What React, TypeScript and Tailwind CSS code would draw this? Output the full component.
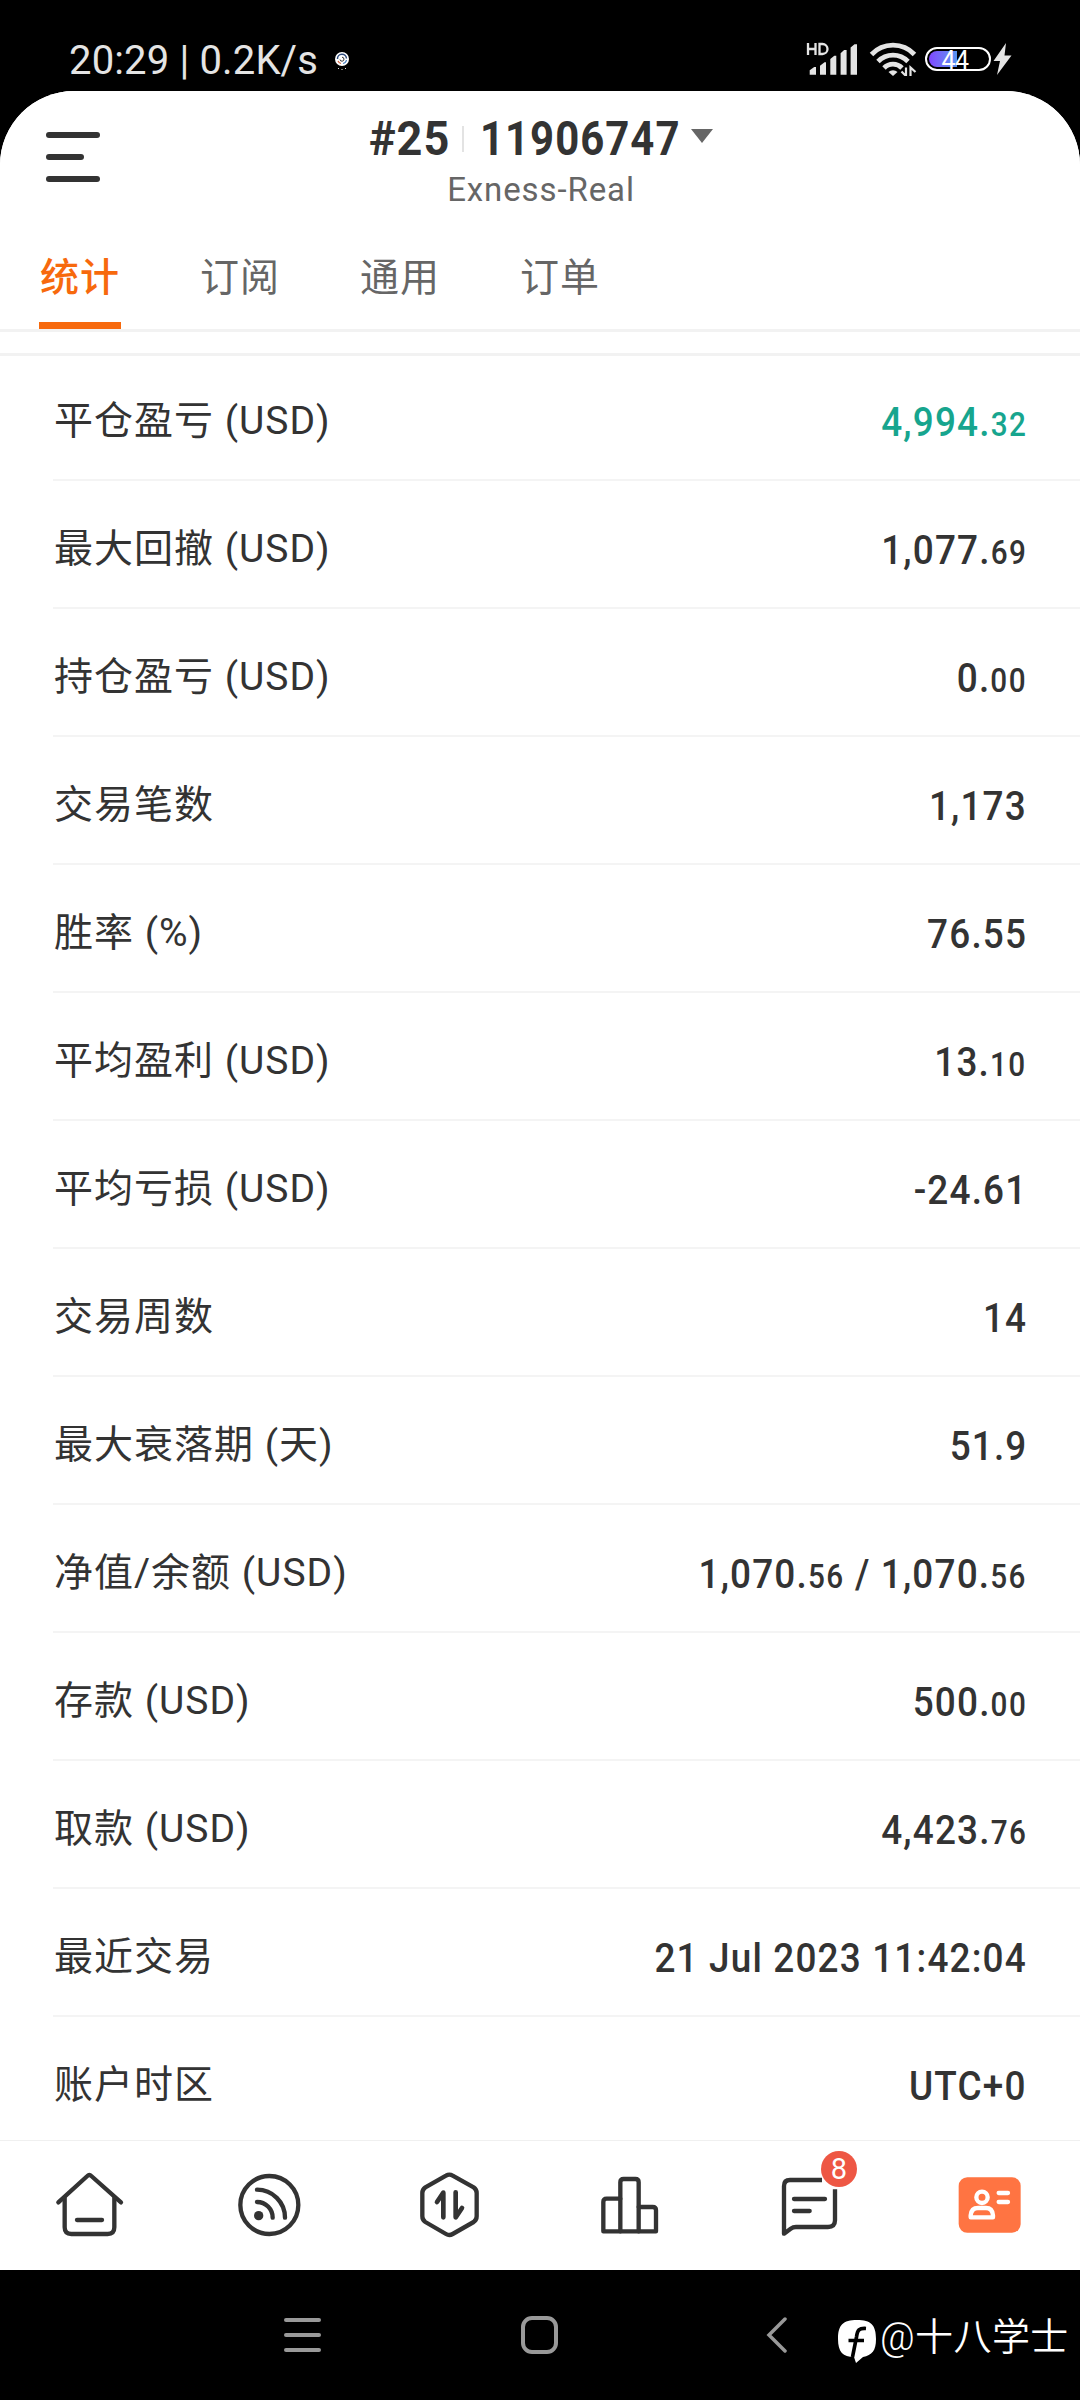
import type { ReactNode } from "react"

const tabs = ["统计", "订阅", "通用", "订单"]

type Amount = { main: string; cents?: string }

type Stat = {
  label: string
  values: Amount[]
  positive?: boolean
}

const stats: Stat[] = [
  { label: "平仓盈亏 (USD)", values: [{ main: "4,994.", cents: "32" }], positive: true },
  { label: "最大回撤 (USD)", values: [{ main: "1,077.", cents: "69" }] },
  { label: "持仓盈亏 (USD)", values: [{ main: "0.", cents: "00" }] },
  { label: "交易笔数", values: [{ main: "1,173" }] },
  { label: "胜率 (%)", values: [{ main: "76.55" }] },
  { label: "平均盈利 (USD)", values: [{ main: "13.", cents: "10" }] },
  { label: "平均亏损 (USD)", values: [{ main: "-24.61" }] },
  { label: "交易周数", values: [{ main: "14" }] },
  { label: "最大衰落期 (天)", values: [{ main: "51.9" }] },
  {
    label: "净值/余额 (USD)",
    values: [
      { main: "1,070.", cents: "56" },
      { main: " / 1,070.", cents: "56" },
    ],
  },
  { label: "存款 (USD)", values: [{ main: "500.", cents: "00" }] },
  { label: "取款 (USD)", values: [{ main: "4,423.", cents: "76" }] },
  { label: "最近交易", values: [{ main: "21 Jul 2023 11:42:04" }] },
  { label: "账户时区", values: [{ main: "UTC+0" }] },
]

function StatusBar() {
  return (
    <div className="flex h-[91px] items-start justify-between pl-[69px] pr-[68px] pt-[35px]">
      <div className="flex items-center pt-[2px]">
        <span className="whitespace-pre text-[40px] leading-[48px] tracking-[0.15px] text-[#e4e4e4]">
          20:29 | 0.2K/s
        </span>
        <svg className="ml-[16px] h-5 w-4" viewBox="0 0 16 20" fill="none">
          <circle cx="8" cy="8" r="7" fill="#fff" />
          <path d="M3.5 8a4.5 4.5 0 0 1 9-.5" stroke="#2d4a7c" strokeWidth="1.5" />
          <path d="M12.5 9a4.5 4.5 0 0 1-3.500 3.500" stroke="#4a7fc0" strokeWidth="1.2" />
          <path d="M4 10a4.500 4.500 0 0 0 3 2.500" stroke="#d2603c" strokeWidth="1.2" />
          <path d="M6 8.500a2 2 0 1 0 2-2.300" stroke="#333" strokeWidth="1" />
          <path d="M4 17.500h1M7.500 18.500h1M11 17.500h1" stroke="#ddd" strokeWidth="1.2" />
        </svg>
      </div>
      <div className="flex pt-[5px]">
        <svg className="h-9 w-[27px]" viewBox="0 0 27 36" fill="none">
          <path d="M2 3v12M9.500 3v12M2 9h7.500M13.500 4v10h3a5 5 0 0 0 0-10z" stroke="#e4e4e4" strokeWidth="2.300" />
          <path d="M3.700 34.700v-4.500l4.500-3.200h1.800v7.700z" fill="#e4e4e4" />
          <path d="M14 34.700v-9l4.500-3.400h1.500v12.400z" fill="#e4e4e4" />
        </svg>
        <svg className="-ml-3 h-9 w-[42px]" viewBox="15 0 42 36" fill="#e4e4e4">
          <path d="M24.300 34.700V19l4-3.300h2v19zM34.600 34.700V13.300l3.500-3.300h2.500v24.700zM44.600 34.700V7.500L48.500 4.300H51v30.400z" />
        </svg>
        <svg className="ml-[6px] h-9 w-[50px]" viewBox="0 0 50 36" fill="none">
          <g stroke="#e4e4e4" strokeWidth="4.800">
            <path d="M2.500 14.500a29.500 29.500 0 0 1 43 0" />
            <path d="M9 21.500a21 21 0 0 1 30 0" />
            <path d="M15 28a12.500 12.500 0 0 1 18 0" />
          </g>
          <path d="M19.500 32a6.500 6.500 0 0 1 9 0l-4.500 4z" fill="#e4e4e4" />
          <path d="M37 27.500V36l-4.500-4.500M41.500 36v-8.500l5 4.500" stroke="#e4e4e4" strokeWidth="2.200" />
        </svg>
        <div className="relative ml-[6px] mt-[7px] flex h-6 w-[66px] items-center justify-center rounded-full border-2 border-white">
          <div className="absolute inset-y-[2px] left-[2px] w-[28px] rounded-l-full bg-linear-to-r from-[#7f45ff] to-[#5593ef]" />
          <span className="relative -left-[3px] top-[1.500px] text-[25px] leading-5 tracking-[-0.5px] text-white">44</span>
        </div>
        <svg className="ml-[2px] mt-[3px] h-8 w-[19px]" viewBox="0 0 19 32">
          <path d="M13 0 .5 18h6.500L4 32 18.500 12.500H11.500z" fill="#e4e4e4" />
        </svg>
      </div>
    </div>
  )
}

function Header() {
  return (
    <header className="grid h-[126px] grid-cols-[1fr_auto_1fr] bg-white">
      <div className="pl-[46px] pt-[41px]">
        <div className="h-1.5 w-[54px] rounded-full bg-[#333]" />
        <div className="mt-4 h-1.5 w-[38px] rounded-full bg-[#333]" />
        <div className="mt-4 h-1.5 w-[54px] rounded-full bg-[#333]" />
      </div>
      <div className="flex w-[346px] flex-col items-center pt-[18px]">
        <div className="flex h-[60px] w-full items-center text-[49px] font-bold leading-[60px] text-[#333]">
          <span className="w-[95px] pl-[2px]">
            <span className="inline-block origin-left scale-x-[.92] tracking-[1px]">#25</span>
          </span>
          <span className="h-[26px] w-[2px] bg-[#e3e3e3]" />
          <span className="w-[227px] pl-[16px]">
            <span className="inline-block origin-left scale-x-[.855] tracking-[1.2px]">11906747</span>
          </span>
          <svg className="-mt-1.5 h-[14px] w-[22px] shrink-0" viewBox="0 0 22 14">
            <path d="M0 0h22L11 14z" fill="#666" />
          </svg>
        </div>
        <div className="pl-[2px] text-[33px] leading-[42px] tracking-[0.9px] text-[#666]">Exness-Real</div>
      </div>
    </header>
  )
}

function Tabs() {
  return (
    <nav className="flex h-[115px] gap-[78px] border-b-3 border-[#f2f2f2] pl-[39px]">
      {tabs.map((tab, i) => (
        <div
          key={tab}
          className={
            i === 0
              ? "flex w-[82px] flex-col justify-between pt-8 pl-px text-[39px] font-medium leading-[58px] tracking-[1px] text-[#f7690d]"
              : "w-[82px] pt-8 pl-px text-[39px] leading-[58px] tracking-[1px] text-[#666]"
          }
        >
          <span>{tab}</span>
          {i === 0 && <div className="-ml-px h-[7px] bg-[#f7690d]" />}
        </div>
      ))}
    </nav>
  )
}

function StatRow({ stat }: { stat: Stat }) {
  return (
    <div className="ml-[53px] flex h-[128px] items-center justify-between border-b-2 border-[#f4f4f4] pr-[53px]">
      <span className="mt-[9px] pl-px text-[39px] leading-[58px] tracking-[1px] text-[#333]">{stat.label}</span>
      <span
        className={
          stat.positive
            ? "mt-3.5 origin-right scale-x-90 whitespace-pre text-[41px] font-medium tracking-[1.3px] text-[#17a58e]"
            : "mt-3.5 origin-right scale-x-90 whitespace-pre text-[41px] font-medium tracking-[1.3px] text-[#333]"
        }
      >
        {stat.values.map((value, i) => (
          <span key={i}>
            {value.main}
            {value.cents && <span className="text-[33px] tracking-[1.600px]">{value.cents}</span>}
          </span>
        ))}
      </span>
    </div>
  )
}

function NavIcon({ children }: { children: ReactNode }) {
  return (
    <svg
      className="h-20 w-20"
      viewBox="150 135 240 240"
      fill="none"
      stroke="#333"
      strokeWidth="13"
      strokeLinecap="round"
      strokeLinejoin="round"
    >
      {children}
    </svg>
  )
}

function BottomNav() {
  return (
    <nav className="grid h-[130px] grid-cols-6 place-items-center border-t border-[#f0f0f0] bg-white pb-0.5">
      <NavIcon>
        <path d="M175 247 262 168Q268 162 274 168L363 247" />
        <path d="M194 234V322Q194 342 214 342H323Q343 342 343 322V234" />
        <path d="M231 300H306" />
      </NavIcon>
      <NavIcon>
        <circle cx="268" cy="255" r="87" />
        <path d="M231 209A84 84 0 0 1 315 293M231 246A47 47 0 0 1 278 293" />
        <circle cx="236" cy="287" r="14" fill="#333" stroke="none" />
      </NavIcon>
      <NavIcon>
        <path d="M258 167Q268 161 278 167L341 202Q350 208 350 219V289Q350 300 341 306L278 342Q268 348 258 342L196 306Q187 300 187 289V219Q187 208 196 202Z" />
        <path d="M250 292V218L231 246M287 217V292L306 264" strokeWidth="14" />
      </NavIcon>
      <NavIcon>
        <path d="M241 236H200Q190 236 190 246V334H348V271Q348 261 338 261H296" />
        <path d="M241 334V187Q241 177 251 177H286Q296 177 296 187V334" />
      </NavIcon>
      <div className="relative">
        <NavIcon>
          <path
            d="M306 180H210Q192 180 192 198V341L212 326Q219 321 228 321H324Q345 321 345 301V208"
            strokeLinecap="butt"
          />
          <path d="M222 237H315M222 273H269" />
        </NavIcon>
        <span className="absolute left-[51px] top-[-14px] flex size-9 items-center justify-center rounded-full bg-[#ee5744] text-[29px] leading-9 text-white">
          8
        </span>
      </div>
      <NavIcon>
        <rect x="176" y="172" width="186" height="166" rx="26" fill="#ff7442" stroke="none" />
        <g stroke="#fff">
          <circle cx="246" cy="232" r="17" />
          <path d="M212 292V286Q214 264 234 264H258Q277 264 279 286V292Z" />
          <path d="M296 219H324M296 246H324" />
        </g>
      </NavIcon>
    </nav>
  )
}

function SystemBar() {
  return (
    <div className="flex h-[130px] items-center pl-[284px] text-white">
      <div className="flex w-[37px] flex-col gap-[11px]">
        <div className="h-1 rounded-full bg-[#999]" />
        <div className="h-1 rounded-full bg-[#999]" />
        <div className="h-1 rounded-full bg-[#999]" />
      </div>
      <div className="ml-[200px] h-[38px] w-[37px] rounded-[11px] border-4 border-[#999]" />
      <svg className="ml-[208px] h-[38px] w-[21px]" viewBox="0 0 21 38" fill="none">
        <path d="M19 3 3 19l16 16" stroke="#999" strokeWidth="3.500" strokeLinecap="round" />
      </svg>
      <svg className="ml-[51px] mt-3 h-[43px] w-[38px]" viewBox="0 0 38 43" fill="none">
        <path
          d="M19 0C33 0 38 5 38 19C38 31 34 35 25 37L18 43L16 37C5 37 0 32 0 19C0 5 5 0 19 0z"
          fill="#fff"
        />
        <path d="M28 8.500C21 8 19.500 10 18.500 17L14.500 37M10.500 20.500H26" stroke="#000" strokeWidth="3.700" />
      </svg>
      <span className="ml-[4px] mt-1 whitespace-nowrap text-[38px] font-[350] leading-[56px] tracking-[0.4px]">
        @十八学士
      </span>
    </div>
  )
}

export default function App() {
  return (
    <div className="flex h-[2400px] w-[1080px] flex-col overflow-hidden bg-black font-[Roboto,'Noto_Sans_CJK_SC',sans-serif]">
      <StatusBar />
      <div className="flex h-[2179px] flex-col overflow-hidden rounded-t-[74px] bg-white">
        <Header />
        <Tabs />
        <main className="mt-[21px] min-h-0 flex-1 overflow-hidden border-t-3 border-[#f2f2f2]">
          <div className="-mt-[3px]">
            {stats.map((stat) => (
              <StatRow key={stat.label} stat={stat} />
            ))}
          </div>
        </main>
        <BottomNav />
      </div>
      <SystemBar />
    </div>
  )
}
